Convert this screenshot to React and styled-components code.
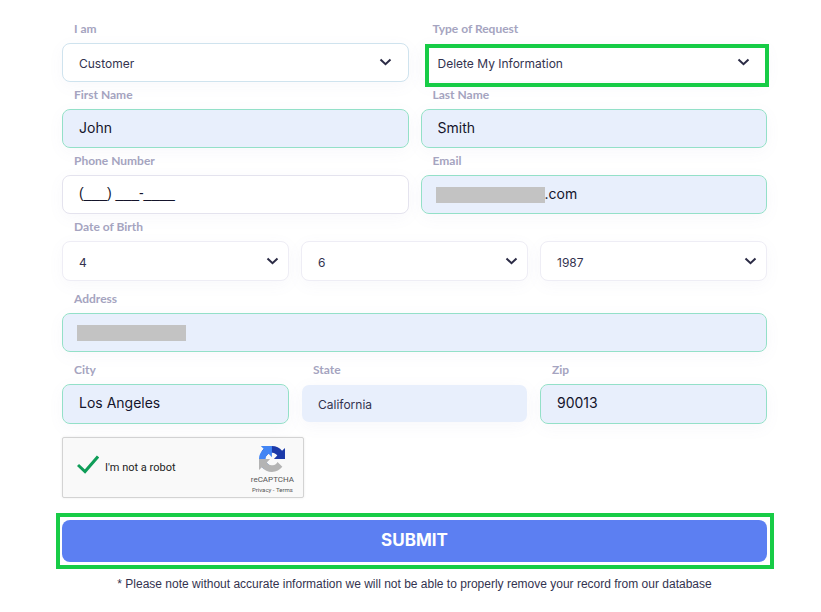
import { useState } from "react";
import styled, { createGlobalStyle, css } from "styled-components";

const GlobalStyle = createGlobalStyle`
  *, *::before, *::after {
    box-sizing: border-box;
  }

  body {
    margin: 0;
    background: #fff;
    color: #33334f;
    font-family: "Inter", "Liberation Sans", sans-serif;
  }
`;

const Form = styled.form`
  padding: 22px 54px 16px 62px;
`;

const Row = styled.div`
  display: grid;
  grid-template-columns: repeat(${props => props.$cols || 1}, minmax(0, 1fr));
  column-gap: 12px;
  margin-bottom: ${props => (props.$loose ? 11 : 6)}px;
`;

const Group = styled.div`
  display: flex;
  flex-direction: column;
  gap: 7px;
  min-width: 0;
`;

const Label = styled.label`
  padding-left: 12px;
  font-family: "Lato", sans-serif;
  font-size: 12px;
  line-height: 14px;
  font-weight: 700;
  color: #a5a4c0;
`;

const borders = {
  plain: "#e4e3ee",
  focus: "#cfe3ee",
  soft: "#eeedf5",
  valid: "#93e0c8",
  none: "transparent",
};

const Box = styled.div`
  display: flex;
  align-items: center;
  height: ${props => (props.$tall ? 40 : 39)}px;
  padding-left: ${props => (props.$masked ? 14 : 16)}px;
  border: 1px solid ${props => borders[props.$border || "plain"]};
  border-radius: 8px;
  background: ${props => (props.$filled ? "#e8effc" : "#fff")};
  background-clip: padding-box;
  box-shadow: 0 4px 16px rgba(120, 110, 180, 0.05);
`;

const control = css`
  flex: 1;
  min-width: 0;
  height: 100%;
  padding: 0;
  border: 0;
  outline: 0;
  background: transparent;
  font-family: inherit;
`;

const Input = styled.input`
  ${control}
  padding-bottom: 3px;
  font-size: 14px;
  color: #14142b;

  &[type="tel"] {
    font-family: "Liberation Sans", sans-serif;
  }
`;

const SelectWrap = styled(Box)`
  position: relative;
  display: grid;
  align-items: center;
  padding-left: 0;

  > * {
    grid-area: 1 / 1;
  }

  svg {
    justify-self: end;
    margin-right: ${props => (props.$tall ? 9 : 16)}px;
    margin-bottom: 1px;
    pointer-events: none;
  }
`;

const Select = styled.select`
  ${control}
  width: 100%;
  padding: 2px 16px 0;
  appearance: none;
  font-size: 12px;
  color: #33334f;
`;

// green frame drawn over the field that needs attention
const Highlight = styled.span`
  position: absolute;
  inset: 0 -3px -6px 3px;
  border: 4px solid #17cc46;
  pointer-events: none;
`;

const Mask = styled.span`
  flex: none;
  width: ${props => props.$width}px;
  height: 16px;
  background: #c3c3c3;
`;

const Captcha = styled.div`
  display: flex;
  align-items: center;
  justify-content: space-between;
  width: 242px;
  height: 61px;
  margin-top: 13px;
  padding: 0 9px 0 14px;
  border: 1px solid #d3d3d3;
  border-radius: 2px;
  background: #f9f9f9;
  box-shadow: 0 0 3px rgba(0, 0, 0, 0.08);
  font-family: "Roboto", sans-serif;
`;

const CaptchaCheck = styled.label`
  display: flex;
  align-items: center;
  gap: 6px;
  font-size: 11px;
  color: #222;
`;

const Tick = styled.span`
  display: grid;
  width: 22px;
  height: 22px;

  > * {
    grid-area: 1 / 1;
  }

  input {
    appearance: none;
    width: 22px;
    height: 22px;
    margin: 0;
    border-radius: 2px;
  }

  input:not(:checked) {
    border: 2px solid #c1c1c1;
  }

  input:not(:checked) + svg {
    display: none;
  }

  svg {
    margin-top: -2px;
    pointer-events: none;
  }
`;

const Brand = styled.div`
  display: flex;
  flex-direction: column;
  align-items: center;
  padding-top: 4px;
  font-size: 8px;
  line-height: 12px;
  color: #555;

  svg {
    margin-bottom: 2px;
  }
`;

const Terms = styled.div`
  font-size: 6px;
  line-height: 8px;

  a {
    color: inherit;
    text-decoration: none;
  }
`;

const SubmitFrame = styled.div`
  margin: 15px -7px 0 -6px;
  padding: 3px 3px 3px 2px;
  border: 4px solid #17cc46;
`;

const SubmitButton = styled.button`
  display: block;
  width: 100%;
  height: 42px;
  padding: 0 0 2px;
  border: 0;
  border-radius: 8px;
  background: #5c7ff2;
  color: #fff;
  font-family: inherit;
  font-size: 17px;
  font-weight: 700;
  cursor: pointer;
`;

const Note = styled.p`
  margin: 7px 0 0;
  font-family: "Liberation Sans", sans-serif;
  font-size: 12px;
  line-height: 16px;
  text-align: center;
  color: #33334f;
`;

function Chevron() {
  return (
    <svg width="13" height="8" viewBox="0 0 13 8" fill="none">
      <path d="M1.5 1.5 6.5 6.2 11.5 1.5" stroke="#2b2b45" strokeWidth="2" />
    </svg>
  );
}

function RecaptchaLogo() {
  return (
    <svg width="26" height="26" viewBox="0 0 64 64">
      <path fill="#1c3aa9" d="M64 31.955l-.033-1.37V4.687l-7.16 7.16C50.948 4.674 42.033.093 32.05.093c-10.4 0-19.622 4.96-25.458 12.64l11.736 11.86a15.55 15.55 0 0 1 4.754-5.334c2.05-1.6 4.952-2.906 8.968-2.906.485 0 .86.057 1.135.163 4.976.393 9.288 3.14 11.828 7.124l-8.307 8.307L64 31.953" />
      <path fill="#4285f4" d="M31.862.094l-1.37.033H4.594l7.16 7.16C4.58 13.147 0 22.06 0 32.046c0 10.4 4.96 19.622 12.64 25.458L24.5 45.768a15.55 15.55 0 0 1-5.334-4.754c-1.6-2.05-2.906-4.952-2.906-8.968 0-.485.057-.86.163-1.135.393-4.976 3.14-9.288 7.124-11.828l8.307 8.307L31.86.095" />
      <path fill="#b4b4b4" d="M.001 32.045l.033 1.37v25.898l7.16-7.16c5.86 7.173 14.774 11.754 24.76 11.754 10.4 0 19.622-4.96 25.458-12.64l-11.736-11.86a15.55 15.55 0 0 1-4.754 5.334c-2.05 1.6-4.952 2.906-8.968 2.906-.485 0-.86-.057-1.135-.163-4.976-.393-9.288-3.14-11.828-7.124l8.307-8.307c-10.522.04-22.4.066-27.295-.005" />
    </svg>
  );
}

function TextField({ id, label, value, type = "text", border = "valid", filled = true, tall, mask }) {
  return (
    <Group>
      <Label htmlFor={id}>{label}</Label>
      <Box $border={border} $filled={filled} $tall={tall} $masked={Boolean(mask)}>
        {mask && <Mask $width={mask} />}
        <Input id={id} type={type} defaultValue={value} />
      </Box>
    </Group>
  );
}

function SelectField({ id, label, ariaLabel, options, border, filled, tall, arrow = true, highlight }) {
  return (
    <Group>
      {label && <Label htmlFor={id}>{label}</Label>}
      <SelectWrap $border={border} $filled={filled} $tall={tall}>
        <Select id={id} aria-label={ariaLabel} defaultValue={options[0]}>
          {options.map(option => (
            <option key={option}>{option}</option>
          ))}
        </Select>
        {arrow && <Chevron />}
        {highlight && <Highlight />}
      </SelectWrap>
    </Group>
  );
}

function App() {
  const [human, setHuman] = useState(true);

  return (
    <>
      <GlobalStyle />
      <Form onSubmit={e => e.preventDefault()}>
        <Row $cols={2}>
          <SelectField id="role" label="I am" options={["Customer"]} border="focus" />
          <SelectField
            id="request"
            label="Type of Request"
            options={["Delete My Information"]}
            border="none"
            highlight
          />
        </Row>

        <Row $cols={2}>
          <TextField id="first" label="First Name" value="John" />
          <TextField id="last" label="Last Name" value="Smith" />
        </Row>

        <Row $cols={2}>
          <TextField id="phone" type="tel" label="Phone Number" value="(___) ___-____" border="plain" filled={false} />
          <TextField id="email" label="Email" value=".com" mask={109} />
        </Row>

        <Group>
          <Label htmlFor="month">Date of Birth</Label>
          <Row $cols={3} $loose>
            <SelectField id="month" options={["4"]} border="soft" tall />
            <SelectField id="day" ariaLabel="Day of birth" options={["6"]} border="soft" tall />
            <SelectField id="year" ariaLabel="Year of birth" options={["1987"]} border="soft" tall />
          </Row>
        </Group>

        <Row $loose>
          <TextField id="address" label="Address" value="" mask={109} />
        </Row>

        <Row $cols={3}>
          <TextField id="city" label="City" value="Los Angeles" tall />
          <SelectField id="state" label="State" options={["California"]} border="none" filled arrow={false} />
          <TextField id="zip" label="Zip" value="90013" tall />
        </Row>

        <Captcha>
          <CaptchaCheck>
            <Tick>
              <input type="checkbox" checked={human} onChange={e => setHuman(e.target.checked)} />
              <svg width="22" height="22" viewBox="0 0 22 22" fill="none">
                <path d="M1 10 8 16.5 21 1.5" stroke="#0f9d58" strokeWidth="3" />
              </svg>
            </Tick>
            I'm not a robot
          </CaptchaCheck>
          <Brand>
            <RecaptchaLogo />
            reCAPTCHA
            <Terms>
              <a href="#privacy">Privacy</a> - <a href="#terms">Terms</a>
            </Terms>
          </Brand>
        </Captcha>

        <SubmitFrame>
          <SubmitButton type="submit">SUBMIT</SubmitButton>
        </SubmitFrame>

        <Note>* Please note without accurate information we will not be able to properly remove your record from our database</Note>
      </Form>
    </>
  );
}

export default App;
